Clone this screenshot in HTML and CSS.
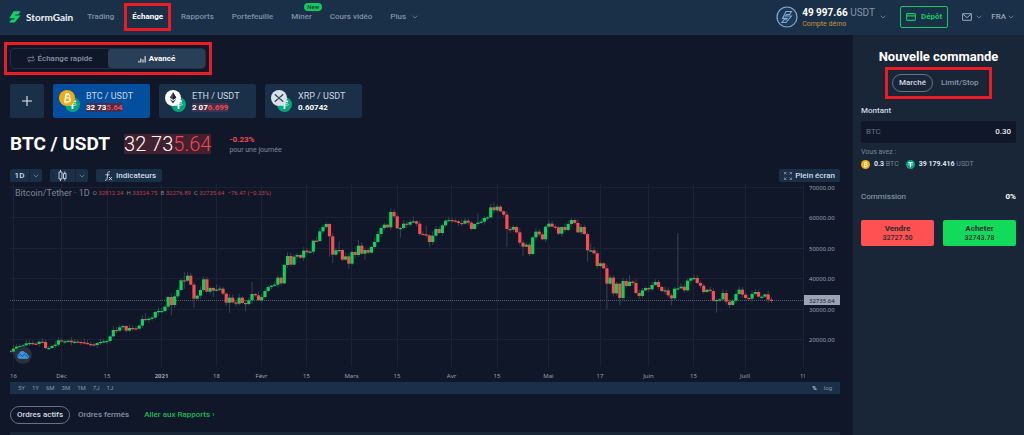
FILE: index.html
```html
<!DOCTYPE html>
<html lang="fr">
<head>
<meta charset="utf-8">
<meta name="viewport" content="width=device-width, initial-scale=1">
<title>StormGain – BTC / USDT</title>
<link rel="stylesheet" href="styles.css">
</head>
<body>
<svg width="0" height="0" class="defs" aria-hidden="true">
  <symbol id="chevron" viewBox="0 0 6 4"><path d="M.7.7 3 3 5.3.7" fill="none" stroke="currentColor" stroke-width=".8"/></symbol>
  <symbol id="btc" viewBox="0 0 16 16"><circle cx="8" cy="8" r="8" fill="#f5ac0b"/><path d="M6.5 4.5h2.6a1.7 1.7 0 0 1 0 3.4H6.2h3.2a1.9 1.9 0 0 1-.3 3.8H5.2M6.9 4.5 5.9 11.7M7.5 3v1.5M9.3 3v1.5M6.4 11.7v1.5M8.2 11.7v1.5" fill="none" stroke="#fff" stroke-width="1.4"/></symbol>
  <symbol id="usdt" viewBox="0 0 16 16"><circle cx="8" cy="8" r="8" fill="#08a57c"/><path d="M4.2 4.7h7.6M8 4.7v8" fill="none" stroke="#e8fff8" stroke-width="2"/><ellipse cx="8" cy="8" rx="4.2" ry="1.1" fill="none" stroke="#e8fff8" stroke-width=".7"/></symbol>
  <symbol id="eth" viewBox="0 0 16 16"><circle cx="8" cy="8" r="8" fill="#fff"/><path d="m8 2.2 3.3 5.6L8 9.8 4.7 7.8z" fill="#454a55"/><path d="m4.7 8.9 3.3 2 3.3-2L8 13.5z" fill="#343843"/><path d="M8 2.2v7.6l3.3-2z" fill="#20242e"/></symbol>
  <symbol id="xrp" viewBox="0 0 16 16"><circle cx="8" cy="8" r="8" fill="#d8e2ea"/><path d="M3.8 4.2 6.5 6.8a2.1 2.1 0 0 0 3 0l2.7-2.6M3.8 11.8l2.7-2.6a2.1 2.1 0 0 1 3 0l2.7 2.6" fill="none" stroke="#35424f" stroke-width="1.2"/></symbol>
</svg>

<header class="topbar">
  <a class="brand" href="#">
    <svg class="brand-mark" viewBox="0 0 12 12"><path d="M4.6.3h6.9L9.3 3.4H6.5l-.8 1.2h5.8L5.6 11.6H.1l2.4-3.1h2.4l1-1.3H.3z" fill="#0bd660"/></svg>
    <span>StormGain</span>
  </a>
  <nav class="nav">
    <a href="#">Trading</a>
    <a href="#" class="active">Échange</a>
    <a href="#">Rapports</a>
    <a href="#">Portefeuille</a>
    <a href="#" class="miner">Miner<span class="badge">New</span></a>
    <a href="#">Cours vidéo</a>
    <a href="#" class="more">Plus <svg class="chev"><use href="#chevron"/></svg></a>
  </nav>
  <div class="account">
    <svg class="avatar" viewBox="0 0 22 22"><circle cx="11" cy="11" r="10" fill="#1d3855" stroke="#84a9d4" stroke-width="1.2"/><path d="M10 5.5h5.5l-2 3h-3l-1 1.5h6L10 16.5H6l2-2.7h2.2l1-1.4H6.5z" fill="none" stroke="#84a9d4" stroke-width="1.1"/></svg>
    <div class="funds"><p><b>49 997.66</b> USDT</p><small>Compte démo</small></div>
    <svg class="chev"><use href="#chevron"/></svg>
  </div>
  <button class="deposit"><svg viewBox="0 0 10 8"><rect x=".6" y=".6" width="8.8" height="6.8" rx=".8" fill="none" stroke="currentColor" stroke-width="1.1"/><path d="M.6 2.9h8.8" stroke="currentColor" stroke-width="1.3"/></svg>Dépôt</button>
  <button class="plain mail" aria-label="Messages"><svg class="envelope" viewBox="0 0 10 8"><path d="M.6.7h8.8v6.6H.6zM.9 1.2 5 4.6l4.1-3.4" fill="none" stroke="currentColor"/></svg><svg class="chev"><use href="#chevron"/></svg></button>
  <button class="plain lang">FRA <svg class="chev"><use href="#chevron"/></svg></button>
</header>

<div class="layout">
  <main class="main">
    <div class="modes">
      <button><svg viewBox="0 0 9 8"><path d="M.7 4.3V3.2q0-1 1-1h6M6 .5l1.8 1.7L6 3.9M8.3 3.9V5q0 1-1 1h-6M3 4.2 1.2 6 3 7.6" fill="none" stroke="currentColor" stroke-width=".8"/></svg>Échange rapide</button>
      <button class="on"><svg viewBox="0 0 9 8"><path d="M1 6v2M3.2 3.5V8M5.6 4.5V8M8 .8V8" stroke="currentColor" stroke-width="1.1"/></svg>Avancé</button>
    </div>

    <div class="pairs">
      <button class="add" aria-label="Ajouter une paire"><svg viewBox="0 0 10 10"><path d="M5 0v10M0 5h10" stroke="#e3e9ef" stroke-width="1.1"/></svg></button>
      <button class="pair selected"><span class="coins"><svg class="quote"><use href="#usdt"/></svg><svg class="base"><use href="#btc"/></svg></span><span class="info"><span>BTC / USDT</span><b class="tick">32 73<i>5.64</i></b></span></button>
      <button class="pair"><span class="coins"><svg class="quote"><use href="#usdt"/></svg><svg class="base"><use href="#eth"/></svg></span><span class="info"><span>ETH / USDT</span><b class="tick">2 07<i>6.699</i></b></span></button>
      <button class="pair"><span class="coins"><svg class="quote"><use href="#usdt"/></svg><svg class="base"><use href="#xrp"/></svg></span><span class="info"><span>XRP / USDT</span><b>0.60742</b></span></button>
    </div>

    <div class="quote-head">
      <h1>BTC / USDT</h1>
      <span class="price">32 73<i>5.64</i></span>
      <div class="change"><b>-0.23%</b><span>pour une journée</span></div>
    </div>

    <div class="tools">
      <button class="tool split"><span>1D</span><span><svg class="chev"><use href="#chevron"/></svg></span></button>
      <button class="tool split wide" aria-label="Type de graphique"><span><svg class="candles" viewBox="0 0 9 11"><path d="M2.5 0v2M2.5 9v2M6.8 1.5v2M6.8 8.5v2M1 2h3v7H1zM5.5 3.5H8v5H5.5z" fill="none" stroke="currentColor" stroke-width=".9"/></svg></span><span><svg class="chev"><use href="#chevron"/></svg></span></button>
      <button class="tool indic"><svg class="fx" viewBox="0 0 9 10"><path d="M6 .9C4.7.2 4 .9 3.8 2.3L3 8c-.2 1.2-1 1.6-2 1.1M1.5 3.8h4M5 6l3 3.2M8 6 5 9.2" fill="none" stroke="currentColor" stroke-width=".9"/></svg>Indicateurs</button>
      <button class="tool full"><svg viewBox="0 0 8 8"><path d="M.5 2.5v-2h2M5.5.5h2v2M7.5 5.5v2h-2M2.5 7.5h-2v-2M.5.5l2 2M7.5.5l-2 2M7.5 7.5l-2-2M.5 7.5l2-2" fill="none" stroke="#8d9aae" stroke-width=".7"/></svg>Plein écran</button>
    </div>

    <section class="chart-wrap">
      <svg class="chart" id="chart" viewBox="0 0 830 198" role="img" aria-label="Cours Bitcoin/Tether, 1D">
        <clipPath id="plot"><path d="M0 0H795V198H0z"/></clipPath>
      </svg>
      <p class="legend"><span class="name">Bitcoin/Tether · 1D</span><span>O <i>32812.24</i></span><span>H <i>33324.75</i></span><span>B <i>32276.89</i></span><span>C <i>32735.64</i></span><i>−76.47 (−0.23%)</i></p>
      <svg class="cloud" viewBox="0 0 18 18"><circle cx="9" cy="9" r="8.8" fill="#2b303b"/><path d="M5.5 12.4a2.3 2.3 0 0 1-.1-4.5 3 3 0 0 1 5.6-1 2.2 2.2 0 0 1 2.2 2 1.8 1.8 0 0 1 .2 3.5z" fill="#3697e8" stroke="#3697e8" stroke-width=".8"/><path d="m3.7 10.4 2.8-1.8 2 2 2-2.7 3.4 3.3" fill="none" stroke="#1c3658" stroke-width=".7"/></svg>
    </section>

    <div class="ranges">
      <button>5Y</button><button>1Y</button><button>6M</button><button>3M</button><button>1M</button><button>7J</button><button>1J</button>
      <button class="pct">%</button><button class="log">log</button>
    </div>

    <div class="orders">
      <button class="pill">Ordres actifs</button>
      <button class="closed">Ordres fermés</button>
      <a href="#">Aller aux Rapports ›</a>
    </div>
    <div class="orders-table"></div>
  </main>

  <aside class="ticket">
    <h2>Nouvelle commande</h2>
    <div class="kinds"><button class="pill">Marché</button><button>Limit/Stop</button></div>
    <label class="amount-label" for="amount">Montant</label>
    <div class="amount"><span>BTC</span><input id="amount" type="text" value="0.30"></div>
    <p class="have">Vous avez :</p>
    <div class="balances">
      <svg><use href="#btc"/></svg><span><b>0.3</b> BTC</span>
      <svg><use href="#usdt"/></svg><span><b>39 179.416</b> USDT</span>
    </div>
    <div class="fee"><span>Commission</span><b>0%</b></div>
    <div class="actions">
      <button class="sell"><b>Vendre</b><span>32727.50</span></button>
      <button class="buy"><b>Acheter</b><span>32743.78</span></button>
    </div>
  </aside>
</div>
<script src="chart.js"></script>
</body>
</html>
```

FILE: styles.css
```css
* { box-sizing: border-box; margin: 0; padding: 0; }
body { background: #101728; color: #fff; font: 8px/10px Roboto, sans-serif; min-height: 100vh; display: flex; flex-direction: column; overflow-x: hidden; }
button { border: 0; background: none; color: inherit; font: inherit; cursor: pointer; }
a { color: inherit; text-decoration: none; }
i { font-style: normal; }
svg { display: block; flex: none; }
.defs { position: absolute; }
.chev { width: 6px; height: 4px; color: #71859a; }

.topbar { display: flex; align-items: center; height: 35px; padding: 0 10px 2px 9px; background: #1a3048; }
.brand { display: flex; align-items: center; gap: 5px; font: 700 10px/12px Lato, sans-serif; color: #eef3f7; }
.brand-mark { width: 12px; height: 12px; }
.nav { display: flex; align-items: center; gap: 18px; margin-left: 14px; color: #8190a8; font-weight: 500; white-space: nowrap; }
.nav a { position: relative; }
.nav .active { color: #fff; font-weight: 700; }
.nav .active::after { content: ""; position: absolute; inset: -9px -8px; border: 3px solid #ed1c24; }
.badge { position: absolute; left: 13px; top: -9px; padding: 0 3px; border-radius: 4px; background: #12c95b; color: #14402f; font-size: 6px; line-height: 8px; }
.more { display: flex; align-items: center; gap: 6px; }
.account { display: flex; align-items: center; margin-left: auto; }
.avatar { width: 22px; height: 22px; }
.funds { margin: 2px 5px 0 4px; font-size: 10px; line-height: 12px; color: #8795aa; white-space: nowrap; }
.funds b { color: #fff; }
.funds small { display: block; font-size: 7px; line-height: 10px; color: #c9922f; }
.deposit { display: flex; align-items: center; gap: 5px; height: 22px; margin-left: 14px; padding: 0 5px; border: 1px solid #13c960; border-radius: 2px; color: #13c960; font-weight: 700; }
.deposit svg { width: 10px; height: 8px; }
.plain { display: flex; align-items: center; gap: 2px; color: #98a6b9; }
.mail { margin-left: 14px; gap: 4px; }
.envelope { width: 10px; height: 8px; }
.lang { margin-left: 9px; font-weight: 500; }

.layout { flex: 1; display: grid; grid-template-columns: minmax(0, 1fr) 171px; }
.main { display: flex; flex-direction: column; padding: 13px 13px 0 10px; }
.modes { position: relative; display: grid; grid-template-columns: 1fr 1fr; width: 196px; height: 21px; border: 1px solid #1c3047; border-radius: 4px; }
.modes::after { content: ""; position: absolute; inset: -7px; border: 3px solid #ed1c24; pointer-events: none; }
.modes button { display: flex; align-items: center; justify-content: center; gap: 3px; color: #8594ab; font-weight: 500; border-radius: 3px; }
.modes .on { background: #293f58; color: #fff; font-weight: 700; }
.modes svg { width: 8px; height: 8px; }

.pairs { display: flex; gap: 9px; margin-top: 15px; }
.add { display: grid; place-items: center; width: 34px; height: 34px; border-radius: 2px; background: #1a3048; }
.add svg { width: 10px; height: 10px; }
.pair { display: flex; align-items: center; gap: 6px; width: 97px; height: 34px; padding: 0 6px; border-radius: 2px; background: #1a3048; text-align: left; }
.selected { background: #034e9e; }
.coins { position: relative; width: 21px; height: 22px; }
.coins svg { position: absolute; }
.base { left: 0; top: 0; width: 16px; height: 16px; }
.quote { right: 0; bottom: 0; width: 15px; height: 15px; }
.info { display: flex; flex-direction: column; align-items: flex-start; gap: 2px; font-size: 9px; line-height: 10px; white-space: nowrap; color: #c9d6e4; }
.info b { color: #fff; font-size: 8px; line-height: 9px; }
.tick { background: #42304c; }
.tick i, .price i { color: #f34950; }

.quote-head { display: flex; align-items: center; margin-top: 15px; height: 22px; }
h1 { font-size: 19px; line-height: 22px; white-space: nowrap; }
.price { margin-left: 14px; background: #42202f; font-size: 20px; line-height: 20px; font-weight: 300; white-space: nowrap; }
.change { margin-left: 18px; font-size: 7px; color: #7e8ba2; }
.change b { display: block; font-size: 8px; line-height: 11px; color: #f34950; }

.tools { display: flex; gap: 8px; margin-top: 14px; }
.tool { display: flex; align-items: center; justify-content: center; height: 13px; border-radius: 2px; background: #1a3048; color: #d4dce6; font-weight: 500; white-space: nowrap; }
.split { width: 32px; }
.split.wide { width: 38px; }
.split span { display: grid; place-items: center; flex: 1; height: 100%; }
.split span + span { flex: none; width: 13px; border-left: 1px solid #13243a; }
.candles { width: 9px; height: 11px; }
.indic { gap: 3px; padding: 0 6px 0 8px; }
.fx { width: 9px; height: 10px; }
.full { gap: 3px; margin-left: auto; padding: 0 5px; }
.full svg { width: 8px; height: 8px; }

.chart-wrap { position: relative; margin-top: 2px; }
.chart { width: 100%; height: auto; font-family: "Noto Sans", sans-serif; }
.chart text { font-size: 6px; fill: #98a1b2; }
.chart .time { text-anchor: middle; }
.chart .year { font-weight: 700; }
.chart .now { fill: #18202f; }
.chart .grid { stroke: #1a2233; stroke-width: 1; }
.chart .current { stroke: #555e6d; stroke-width: 1; stroke-dasharray: 1 1; }
.chart .tag { fill: #9ba4b5; }
.up { fill: #0fd15a; }
.down { fill: #fb4d51; }
.wick { fill: #384151; }
.legend { position: absolute; left: 5px; top: 4px; display: flex; gap: 3px; font-size: 6px; line-height: 10px; color: #7b8598; white-space: nowrap; }
.legend .name { font-size: 9px; }
.legend i { color: #c23c4b; }
.cloud { position: absolute; left: 4px; bottom: 18px; width: 18px; height: 18px; }

.ranges { display: flex; align-items: center; gap: 7px; height: 12px; padding: 0 8px; background: #1a3048; color: #8995a6; font-size: 6px; line-height: 10px; }
.ranges .pct { margin-left: auto; color: #c2cad6; font-weight: 700; }

.orders { display: flex; align-items: center; gap: 8px; margin-top: 12px; color: #8491a7; font-weight: 500; }
.pill { height: 18px; padding: 0 6px; border: 1px solid #667285; border-radius: 9px; color: #d3dae4; font-weight: 500; }
.orders a { margin-left: 7px; color: #14ba57; }
.orders-table { flex: 1; margin-top: 8px; background: #192638; }

.ticket { padding: 15px 8px 0; background: #192638; }
h2 { font-size: 13px; line-height: 14px; text-align: center; }
.kinds { display: flex; align-items: center; gap: 8px; width: 93px; margin: 10px auto 0; outline: 3px solid #ed1c24; outline-offset: 4px; color: #8795a9; font-weight: 500; }
.kinds .pill { height: 18px; }
.amount-label { display: block; margin-top: 14px; font-weight: 500; color: #cfd7e1; }
.amount { display: flex; align-items: center; height: 22px; margin-top: 5px; padding: 0 5px; border-radius: 2px; background: #101728; color: #66758b; }
.amount input { flex: 1; min-width: 0; border: 0; outline: 0; background: none; color: #e5eaf0; font: 500 8px/10px Roboto, sans-serif; text-align: right; }
.have { margin-top: 4px; font-size: 7px; color: #78889d; }
.balances { display: flex; align-items: center; gap: 4px; margin-top: 2px; font-size: 7px; color: #75849a; white-space: nowrap; }
.balances svg { width: 9px; height: 9px; }
.balances b { color: #dde4ed; }
.balances span + svg { margin-left: 3px; }
.fee { display: flex; justify-content: space-between; margin-top: 23px; color: #98a6b9; }
.fee b { color: #fff; }
.actions { display: grid; grid-template-columns: 1fr 1fr; gap: 9px; margin-top: 18px; }
.actions button { height: 26px; border-radius: 2px; color: #1b2e33; }
.actions b, .actions span { display: block; line-height: 10px; }
.actions span { font-size: 7px; font-weight: 500; line-height: 8px; }
.sell { background: #ff5151; }
.buy { background: #12da5b; }
```

FILE: chart.js
```js
const NS = 'http://www.w3.org/2000/svg';
const chart = document.getElementById('chart');

function add(tag, attrs, text) {
  const el = document.createElementNS(NS, tag);
  for (const key in attrs) el.setAttribute(key, attrs[key]);
  if (text) el.textContent = text;
  chart.appendChild(el);
}

// Daily closes, in thirds of a chart unit measured downwards.
const closes = [
  515, 506, 500, 498, 496, 490, 489, 491, 492, 485, 486, 504, 504, 498, 494, 481, 484, 484, 482, 487,
  485, 486, 487, 489, 492, 493, 495, 489, 486, 484, 483, 469, 450, 452, 442, 438, 452, 444, 445, 446,
  437, 417, 420, 416, 413, 396, 393, 393, 380, 351, 375, 349, 330, 301, 302, 287, 314, 356, 347, 330,
  298, 335, 324, 332, 329, 326, 341, 368, 353, 367, 371, 353, 369, 372, 361, 342, 346, 361, 351, 333,
  321, 317, 314, 293, 310, 255, 228, 254, 230, 225, 233, 212, 217, 215, 182, 183, 154, 141, 132, 169,
  224, 211, 210, 239, 229, 251, 216, 225, 197, 221, 210, 218, 201, 186, 162, 144, 134, 142, 96, 109,
  145, 144, 131, 134, 126, 124, 131, 162, 163, 166, 186, 167, 147, 159, 136, 122, 120, 122, 124, 129,
  131, 122, 128, 147, 132, 128, 125, 114, 112, 82, 91, 80, 94, 104, 147, 149, 141, 157, 188, 200,
  194, 222, 172, 155, 163, 178, 140, 131, 140, 142, 161, 141, 150, 132, 120, 129, 157, 141, 162, 211,
  211, 220, 258, 250, 265, 311, 293, 340, 311, 354, 303, 318, 305, 309, 339, 348, 331, 324, 328, 315,
  306, 321, 333, 331, 346, 355, 326, 325, 320, 331, 302, 295, 294, 309, 317, 336, 329, 333, 362, 360,
  358, 339, 365, 375, 362, 342, 329, 344, 354, 356, 342, 336, 350, 350, 343, 359, 363
];
// Days whose range reaches well beyond the candle body.
const highs = { 42: 400, 54: 275, 64: 313, 71: 341, 75: 306, 102: 184, 108: 180, 125: 110, 129: 137, 145: 100, 150: 66, 207: 159, 192: 285, 180: 190 };
const lows = { 11: 508, 50: 406, 54: 327, 57: 383, 63: 351, 68: 398, 73: 394, 99: 230, 100: 249, 105: 267, 110: 240, 121: 173, 130: 200, 154: 202, 159: 229, 179: 245, 185: 388, 189: 377, 205: 376, 219: 398, 223: 384 };

const y = v => v / 3 - 4;
const step = 3.226;

for (let k = 0; k < 6; k++) {
  const gy = Math.round(3 + k * 30.45) + 0.5;
  add('path', { class: 'grid', d: `M0 ${gy}H794` });
  add('text', { x: 799, y: gy + 2 }, `${70000 - k * 10000}.00`);
}

const times = [[3.5, '16'], [51.5, 'Déc'], [97, '15'], [151.5, '2021'], [206.5, '18'], [251.5, 'Févr'], [296.5, '15'], [341.5, 'Mars'], [387, '15'], [441.5, 'Avr'], [487, '15'], [538.5, 'Mai'], [590, '17'], [638.5, 'Juin'], [683.5, '15'], [735, 'Juill'], [793.5, '19']];
for (const [x, label] of times) {
  add('path', { class: 'grid', d: `M${Math.floor(x) + 0.5} 0V183` });
  add('text', { x, y: 194, class: label === '2021' ? 'time year' : 'time', 'clip-path': 'url(#plot)' }, label);
}
add('path', { class: 'current', d: 'M0 116.5H794' });

closes.forEach((close, n) => {
  const open = n ? closes[n - 1] : 513;
  const x = 0.1 + n * step;
  const hi = highs[n] || Math.min(open, close) - 3 - (n * 7) % 9;
  const lo = lows[n] || Math.max(open, close) + 2 + (n * 5) % 8;
  add('rect', { class: 'wick', x: x - 0.5, y: y(hi), width: 1, height: (lo - hi) / 3 });
  add('rect', { class: close > open ? 'down' : 'up', x: x - 1.6, y: y(Math.min(open, close)), width: 3.2, height: Math.max(1.2, Math.abs(close - open) / 3) });
});

add('rect', { class: 'tag', x: 794, y: 111, width: 36, height: 10 });
add('text', { class: 'now', x: 799, y: 118.5 }, '32735.64');
```
